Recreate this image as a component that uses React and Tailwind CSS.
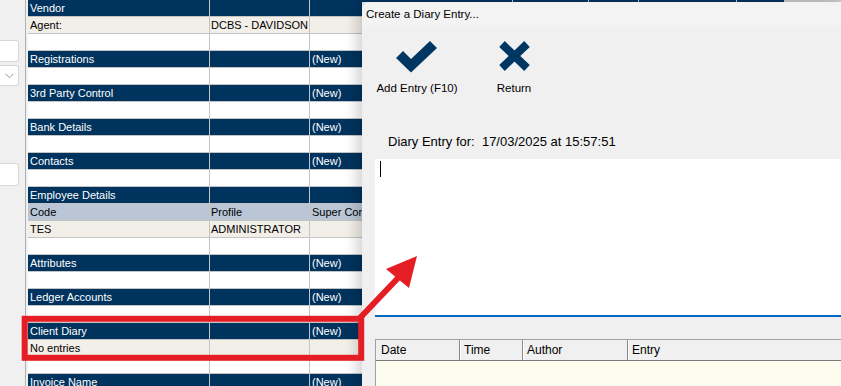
import React from 'react';

const NAVY = 'bg-[#00335e]';

const rows = [
  { t: 'h', c: ['Vendor', '', ''] },
  { t: 'd', c: ['Agent:', 'DCBS - DAVIDSON', ''] },
  { t: 'e' },
  { t: 'h', c: ['Registrations', '', '(New)'] },
  { t: 'e' },
  { t: 'h', c: ['3rd Party Control', '', '(New)'] },
  { t: 'e' },
  { t: 'h', c: ['Bank Details', '', '(New)'] },
  { t: 'e' },
  { t: 'h', c: ['Contacts', '', '(New)'] },
  { t: 'e' },
  { t: 'h', c: ['Employee Details', '', ''] },
  { t: 's', c: ['Code', 'Profile', 'Super Con'] },
  { t: 'd', c: ['TES', 'ADMINISTRATOR', ''] },
  { t: 'e' },
  { t: 'h', c: ['Attributes', '', '(New)'] },
  { t: 'e' },
  { t: 'h', c: ['Ledger Accounts', '', '(New)'] },
  { t: 'e' },
  { t: 'h', c: ['Client Diary', '', '(New)'] },
  { t: 'd', c: ['No entries', '', ''] },
  { t: 'e' },
  { t: 'h', c: ['Invoice Name', '', '(New)'] },
];

function Row({ row }) {
  const cells = row.c || ['', '', ''];
  let tone = 'bg-white text-black';
  if (row.t === 'h') tone = `${NAVY} text-white`;
  if (row.t === 'd') tone = 'bg-[#f2eee8] text-black';
  if (row.t === 's') tone = 'bg-[#bac6d6] text-black';
  return (
    <div className={`flex h-[17px] border-b border-[#c4c4c4] text-[11px] leading-[16px] ${tone}`}>
      <div className="w-[182px] shrink-0 border-r border-[#c4c4c4] px-[2px] whitespace-nowrap overflow-hidden">{cells[0]}</div>
      <div className="w-[100px] shrink-0 border-r border-[#c4c4c4] px-[1px] whitespace-nowrap overflow-hidden">{cells[1]}</div>
      <div className="flex-1 px-[2px] whitespace-nowrap overflow-hidden">{cells[2]}</div>
    </div>
  );
}

function CheckIcon() {
  return (
    <svg width="42" height="33" viewBox="0 0 42 33">
      <polygon points="0,18 7,11 15,19 34,1 41,8 15,32.5" fill="#003762" />
    </svg>
  );
}

function CrossIcon() {
  return (
    <svg width="33" height="32" viewBox="0 0 33 32">
      <line x1="4" y1="4" x2="29" y2="28" stroke="#003762" strokeWidth="8" />
      <line x1="29" y1="4" x2="4" y2="28" stroke="#003762" strokeWidth="8" />
    </svg>
  );
}

function App() {
  return (
    <div className="relative w-[841px] h-[386px] overflow-hidden bg-[#f0f0f0] flex font-['Liberation_Sans',Arial,sans-serif]">
      {/* left strip with cut-off inputs */}
      <div className="w-[26px] shrink-0 border-r border-[#b0b0b0] flex flex-col">
        <div className="mt-[40px] h-[22px] w-[19px] bg-white border border-l-0 border-[#d6d6d6] rounded-r-[3px]" />
        <div className="mt-[3px] h-[21px] w-[19px] bg-white border border-l-0 border-[#d6d6d6] rounded-r-[3px] flex items-center justify-center">
          <svg width="9" height="6" viewBox="0 0 9 6" className="ml-[1px]">
            <polyline points="0.5,0.8 4.5,4.8 8.5,0.8" fill="none" stroke="#9a9a9a" strokeWidth="1" />
          </svg>
        </div>
        <div className="mt-[77px] h-[23px] w-[19px] bg-white border border-l-0 border-[#d6d6d6] rounded-r-[3px]" />
      </div>
      <div className="w-[2px] shrink-0" />

      {/* client details grid */}
      <div className="w-[334px] shrink-0 overflow-hidden">
        {rows.map((row, i) => (
          <Row key={i} row={row} />
        ))}
      </div>

      {/* dialog window */}
      <div className="flex-1 flex flex-col">
        <div className="h-[2px] flex bg-[#c8c8c8]">
          <div className={`w-[150px] ${NAVY}`} />
          <div className="w-px" />
          <div className={`w-[75px] ${NAVY}`} />
          <div className="w-px" />
          <div className={`w-[49px] ${NAVY}`} />
          <div className="w-px" />
          <div className={`w-[97px] ${NAVY}`} />
          <div className="w-px" />
          <div className={`w-[47px] ${NAVY}`} />
        </div>
        <div className="flex-1 flex flex-col rounded-tl-[8px] bg-[#f0f0f0] shadow-[-5px_0_14px_rgba(0,0,0,0.18)]">
          <div className="h-[25px] rounded-tl-[8px] bg-[#f3f3f3] pl-[4px] pt-[1px] flex items-center text-[11.5px] text-black">
            Create a Diary Entry...
          </div>

          <div className="flex pt-[13px] pl-[10px] text-[11.5px] text-black">
            <div className="w-[90px] flex flex-col items-center">
              <CheckIcon />
              <div className="mt-[8px] leading-[14px]">Add Entry (F10)</div>
            </div>
            <div className="w-[88px] ml-[8px] flex flex-col items-center">
              <CrossIcon />
              <div className="mt-[9px] leading-[14px]">Return</div>
            </div>
          </div>

          <div className="mt-[39px] pl-[26px] text-[13px] leading-[15px] text-black whitespace-pre">
            {'Diary Entry for:  17/03/2025 at 15:57:51'}
          </div>

          <div className="mt-[10px] ml-[13px] h-[158px] bg-white border-b-2 border-[#0067c0] pt-[2px] pl-[5px]">
            <div className="w-px h-[16px] bg-black" />
          </div>

          <div className="mt-[22px] ml-[13px] flex-1 flex flex-col border-t border-l border-[#a0a0a0]">
            <div className="h-[21px] flex border-b border-[#7a7a7a] bg-[#f0f0f0] text-[12px] text-black">
              <div className="w-[84px] border-r border-[#8a8a8a] pl-[5px] flex items-center">Date</div>
              <div className="w-[63px] border-r border-[#8a8a8a] border-l border-l-white pl-[3px] flex items-center">Time</div>
              <div className="w-[105px] border-r border-[#8a8a8a] border-l border-l-white pl-[3px] flex items-center">Author</div>
              <div className="flex-1 border-l border-l-white pl-[3px] flex items-center">Entry</div>
            </div>
            <div className="flex-1 bg-[#fdfdef]" />
          </div>
        </div>
      </div>

      {/* red annotation */}
      <svg className="absolute left-0 top-0 pointer-events-none" width="841" height="386" viewBox="0 0 841 386">
        <rect x="24.7" y="318.8" width="336.5" height="39" fill="none" stroke="#e41e24" strokeWidth="6" />
        <line x1="358" y1="320" x2="399" y2="277" stroke="#e41e24" strokeWidth="6" />
        <polygon points="417,256 386,269 409,288" fill="#e41e24" />
      </svg>
    </div>
  );
}

export default App;
